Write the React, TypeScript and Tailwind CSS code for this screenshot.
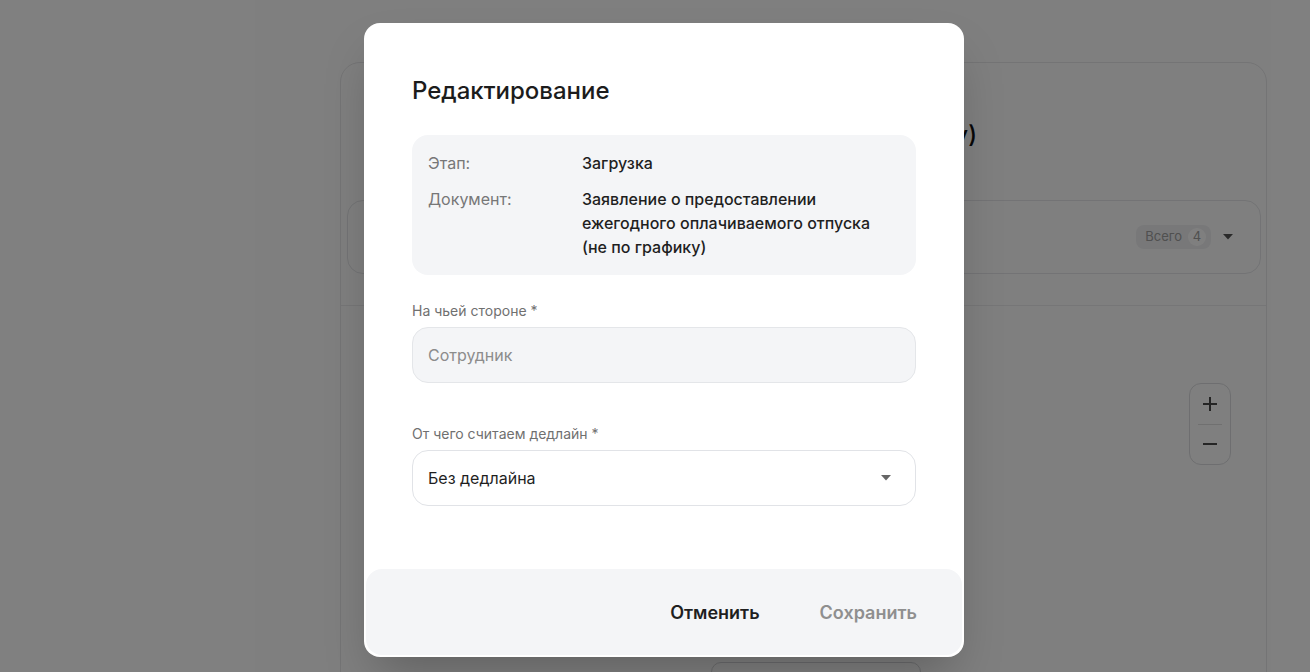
import React from "react";

function Caret({ className }: { className?: string }) {
  return (
    <svg width="10" height="6" viewBox="0 0 10 6" className={className}>
      <path d="M0 0 L10 0 L5 5.5 Z" fill="currentColor" />
    </svg>
  );
}

function Background() {
  return (
    <div className="w-full h-full bg-white pt-[62px] pl-[340px]">
      <div className="w-[927px] h-[700px] border border-[#e8e8ea] rounded-[20px] flex flex-col">
        <div className="h-[243px] flex flex-col border-b border-[#ececee]">
          <div className="w-[636px] text-right pt-[56px] text-[24px] leading-[32px] font-medium text-[#111]">
            Заявление о предоставлении (не по графику)
          </div>
          <div className="mt-[49px] ml-[6px] mr-[5px] h-[74px] border border-[#e6e7ea] rounded-[16px] flex items-center justify-end pr-[27px] gap-[12px]">
            <div className="flex items-center gap-[6px] bg-[#f0f1f3] rounded-[8px] pl-[9px] pr-[5px] h-[24px] text-[13px] text-[#a0a0a0]">
              Всего
              <span className="bg-white rounded-full w-[18px] h-[18px] flex items-center justify-center text-[13px]">4</span>
            </div>
            <Caret className="text-[#555]" />
          </div>
        </div>
        <div className="flex justify-end pr-[35px] pt-[77px]">
          <div className="w-[42px] h-[82px] border border-[#dcdde0] rounded-[12px] flex flex-col items-center">
            <div className="h-[40px] flex items-center justify-center text-[#4a4a4a]">
              <svg width="16" height="16" viewBox="0 0 16 16">
                <path d="M8 1 V15 M1 8 H15" stroke="currentColor" strokeWidth="2" />
              </svg>
            </div>
            <div className="w-[24px] h-px bg-[#e0e0e0]" />
            <div className="h-[40px] flex items-center justify-center text-[#4a4a4a]">
              <svg width="16" height="16" viewBox="0 0 16 16">
                <path d="M1 8 H15" stroke="currentColor" strokeWidth="2" />
              </svg>
            </div>
          </div>
        </div>
        <div className="ml-[370px] mt-[197px] w-[210px] h-[40px] border border-[#d6d7da] rounded-[10px]" />
      </div>
    </div>
  );
}

export default function App() {
  return (
    <div
      className="relative w-full h-[672px] overflow-hidden"
      style={{ fontFamily: "Inter, 'Noto Sans', sans-serif" }}
    >
      <Background />
      <div className="absolute inset-0 bg-black/50" />
      <div className="absolute left-[364px] top-[23px] w-[600px] h-[634px] bg-white rounded-[16px] shadow-2xl flex flex-col">
        <div className="px-12 pt-[50px] flex-1">
          <h2 className="text-[24px] leading-[36px] font-medium text-[#1c1c1c]">Редактирование</h2>
          <div className="mt-[26px] bg-[#f4f5f7] rounded-[16px] px-4 py-4 flex flex-col gap-3 text-[16px] leading-[24px]">
            <div className="flex">
              <div className="w-[154px] text-[#777]">Этап:</div>
              <div className="font-medium text-[#1f1f1f]">Загрузка</div>
            </div>
            <div className="flex">
              <div className="w-[154px] text-[#777]">Документ:</div>
              <div className="font-medium text-[#1f1f1f] w-[305px]">
                Заявление о предоставлении ежегодного оплачиваемого отпуска (не по графику)
              </div>
            </div>
          </div>
          <div className="mt-[26px] text-[14px] leading-[20px] text-[#707070]">На чьей стороне *</div>
          <div className="mt-[6px] w-[504px] h-[56px] rounded-[16px] bg-[#f4f5f7] border border-[#e4e6e9] flex items-center pl-[15px] pr-4 text-[16px] text-[#8c8c8c]">
            Сотрудник
          </div>
          <div className="mt-[41px] text-[14px] leading-[20px] text-[#707070]">От чего считаем дедлайн *</div>
          <div className="mt-[6px] w-[504px] h-[56px] rounded-[16px] bg-white border border-[#e1e3e7] flex items-center justify-between pl-[15px] pr-[24px] text-[16px] text-[#1f1f1f]">
            Без дедлайна
            <Caret className="text-[#666]" />
          </div>
        </div>
        <div className="mx-[2px] mb-[2px] h-[86px] bg-[#f4f5f7] rounded-[16px] flex items-center justify-end pr-[45px] gap-[60px] text-[18px] font-semibold">
          <button className="text-[#1f1f1f]">Отменить</button>
          <button className="text-[#8f8f8f]">Сохранить</button>
        </div>
      </div>
    </div>
  );
}
